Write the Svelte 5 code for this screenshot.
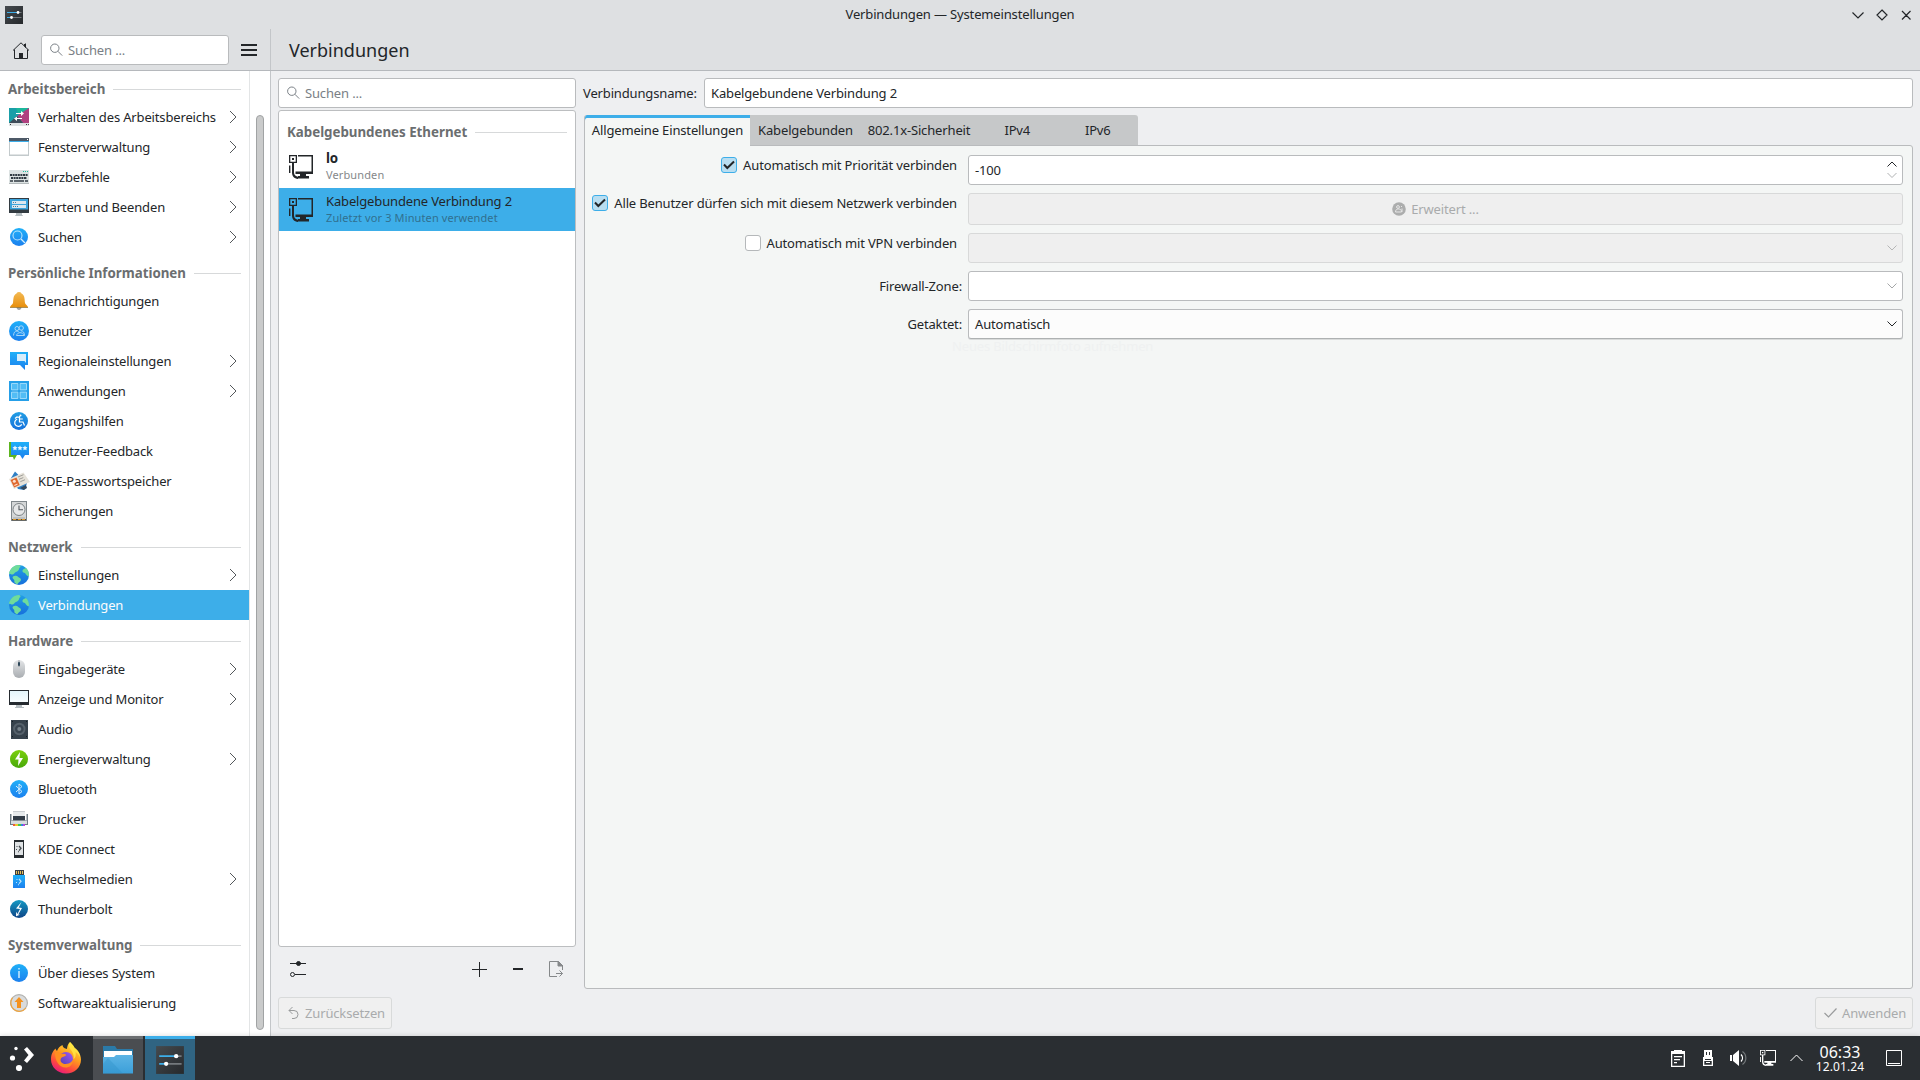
<script lang="ts">
  interface Item {
    icon: string;
    label: string;
    more?: boolean;
  }

  interface Section {
    title: string;
    items: Item[];
  }

  const sections: Section[] = [
    {
      title: 'Arbeitsbereich',
      items: [
        { icon: 'workspace', label: 'Verhalten des Arbeitsbereichs', more: true },
        { icon: 'window', label: 'Fensterverwaltung', more: true },
        { icon: 'keyboard', label: 'Kurzbefehle', more: true },
        { icon: 'startup', label: 'Starten und Beenden', more: true },
        { icon: 'search', label: 'Suchen', more: true },
      ],
    },
    {
      title: 'Persönliche Informationen',
      items: [
        { icon: 'bell', label: 'Benachrichtigungen' },
        { icon: 'users', label: 'Benutzer' },
        { icon: 'region', label: 'Regionaleinstellungen', more: true },
        { icon: 'apps', label: 'Anwendungen', more: true },
        { icon: 'access', label: 'Zugangshilfen' },
        { icon: 'feedback', label: 'Benutzer-Feedback' },
        { icon: 'wallet', label: 'KDE-Passwortspeicher' },
        { icon: 'backup', label: 'Sicherungen' },
      ],
    },
    {
      title: 'Netzwerk',
      items: [
        { icon: 'globe', label: 'Einstellungen', more: true },
        { icon: 'globe', label: 'Verbindungen' },
      ],
    },
    {
      title: 'Hardware',
      items: [
        { icon: 'mouse', label: 'Eingabegeräte', more: true },
        { icon: 'monitor', label: 'Anzeige und Monitor', more: true },
        { icon: 'audio', label: 'Audio' },
        { icon: 'power', label: 'Energieverwaltung', more: true },
        { icon: 'bluetooth', label: 'Bluetooth' },
        { icon: 'printer', label: 'Drucker' },
        { icon: 'phone', label: 'KDE Connect' },
        { icon: 'usb', label: 'Wechselmedien', more: true },
        { icon: 'thunderbolt', label: 'Thunderbolt' },
      ],
    },
    {
      title: 'Systemverwaltung',
      items: [
        { icon: 'info', label: 'Über dieses System' },
        { icon: 'update', label: 'Softwareaktualisierung' },
      ],
    },
  ];

  // 22x22 glyphs, gradients live in the shared defs at the top of the page
  const icons: Record<string, string> = {
    workspace: `<path d="M1 2h20v15H1z" fill="#1a9fa8"/><path d="M8 2h13L11 10z" fill="#1cb79b"/><path d="M21 2v15h-6l-6-7z" fill="#b0417f"/><path d="M1 17l8-7 6 7z" fill="#3f4c59"/><path d="M1 17h20v3H1z" fill="#dfe3e4"/><path d="M2 18h1v1H2zM18 18h1v1h-1zM20 18h.8v1H20z" fill="#333"/><path d="M8 7h5V5l3 2.500L13 10V8H8zM14 13H9v2l-3-2.500L9 10.500V12h5z" fill="#fff"/>`,
    window: `<path d="M1 2h20v18H1z" fill="#c3cacc"/><path d="M1 2h20v3H1z" fill="#4d5967"/><path d="M1 5h20v1H1z" fill="#3daee9"/><path d="M2 6h18v12.500H2z" fill="#fff"/><path d="M19 3h1v1h-1z" fill="#fff"/>`,
    keyboard: `<path d="M1 4h20v14H1z" fill="#dce2e2"/><path d="M1 17h20v1H1z" fill="#b4babb"/><path d="M15 5h1v1h-1zM17 5h1v1h-1zM19 5h1v1h-1z" fill="#1abc9c"/><path d="M2 9h18M3 12h16" stroke="#303a42" stroke-width="2" stroke-dasharray="2 .6"/><path d="M2 15h3M6 15h10M17 15h3" stroke="#303a42" stroke-width="1.700"/>`,
    startup: `<path d="M8 17h6v2.300h1v.7H7v-.7h1z" fill="#b6bec2"/><path d="M1 2h20v15H1z" fill="#333b41"/><path d="M2 3h18v10.500H2z" fill="#3ca4dc"/><path d="M4 5h14v3H4zM4 9h14v3H4z" fill="#dbe7ee"/><path d="M5 6h1v1H5zM7 6h1v1H7zM5 10h1v1H5zM7 10h1v1H7zM9 10h1v1H9z" fill="#4b7d9c"/>`,
    search: `<circle cx="11" cy="11" r="9" fill="url(#gblue)"/><circle cx="9.500" cy="9.500" r="4.500" fill="none" stroke="#b9e3fb" stroke-width="1.100"/><path d="M13 13l4 4" stroke="#d5effd" stroke-width="1.300"/>`,
    bell: `<path d="M8.500 17h5c0 4-5 4-5 0" fill="#9fa3a6"/><path d="M11 2c2 0 2 1 2.500 1.600C17 5 16.500 10 17 13c.4 1.600 2 2 3 4H2c1-2 2.600-2.400 3-4 .5-3 0-8 3.500-9.400C9 3 9 2 11 2z" fill="url(#gbell)"/><path d="M2 17h18v.8H2z" fill="#9a7327"/>`,
    users: `<circle cx="11" cy="11" r="10" fill="url(#gblue)"/><g fill="none" stroke="#a9d7f8" stroke-width="1"><circle cx="9" cy="8.500" r="2"/><circle cx="13.200" cy="8" r="2.200"/><path d="M5.500 15.500c.2-3 1.500-4.500 3.500-4.500 1 0 1.500.5 2 1.200M8.500 15.500c.4-1.800 2-2.800 3.500-2.800s3.600.6 4.500 2.800zM13 10.800c2.200 0 3.300 2 3.500 4"/></g>`,
    region: `<path d="M2 2h18v13h-3v5l-5-5H2z" fill="url(#gblue)"/><path d="M9 4h9v9l-1.500-2H9z" fill="#d7eefb"/>`,
    apps: `<path d="M1 1h20v20H1z" fill="#259fe8"/><g fill="#52bdf5" stroke="#a6defa" stroke-width=".9"><path d="M3.500 3.500h6.400v6.400H3.500zM12.100 3.500h6.400v6.400h-6.400zM3.500 12.100h6.400v6.400H3.500zM12.100 12.100h6.400v6.400h-6.400z"/></g>`,
    access: `<circle cx="11" cy="11" r="9" fill="url(#gblue2)"/><path d="M11.500 6v6h3.500l1.500 3.500M11.500 9h3.300M9.200 9.200a3.700 3.700 0 1 0 4.500 5.200M7 8.500l2-1.500 2.500.5" fill="none" stroke="#fff" stroke-width="1.200"/><circle cx="12.500" cy="5.500" r="1" fill="#fff"/>`,
    feedback: `<path d="M1 2h4v13h4l-3 5-1-3H1z" fill="#5db51f"/><path d="M3 2h18v13h-4l-2.500 4L12 15H3z" fill="url(#gblue)"/><path d="M7 5.500l.8 1.600 1.700.2-1.200 1.200.3 1.800L7 9.400l-1.600.9.3-1.800-1.200-1.200 1.700-.2zM12 5.500l.8 1.600 1.700.2-1.200 1.200.3 1.800-1.600-.9-1.600.9.3-1.800-1.200-1.200 1.700-.2zM17 5.500l.8 1.600 1.700.2-1.200 1.200.3 1.800-1.600-.9-1.600.9.3-1.800-1.200-1.200 1.700-.2z" fill="#e8f6fe"/>`,
    wallet: `<path d="M7 1.500l12 12-3 6.500-6-1L3 8z" fill="#2f7fc4"/><path d="M12 18l6-3 1 3-3 2z" fill="#34495e"/><path d="M1 9L15.500 2.500 22 12 6 19z" fill="#e6e2d9"/><path d="M2.500 10l6-2.600 3.200 7.600-5.500 2.500z" fill="#e0672c"/><circle cx="6.300" cy="11.300" r="1.500" fill="#fbe2d2"/><path d="M6.300 15.500l3.200-1.500" stroke="#fbe2d2" stroke-width="1.200"/><path d="M10 7l5.500-2.300M11 9.300l4.300-1.700M12.300 11.700l4.700-2" stroke="#8b8b88" stroke-width=".8"/>`,
    backup: `<path d="M3 1h16v20H3z" fill="#80878b"/><path d="M4 2h14v18H4z" fill="#d4d6d7"/><circle cx="11" cy="9.500" r="6" fill="#e6e7e8" stroke="#7b8184"/><path d="M11 5.500v4.300h4" fill="none" stroke="#555b5f" stroke-width="1.100"/><path d="M5 17h12v2H5z" fill="#bcc0c2"/><path d="M4 19h14v1.500H4z" fill="#4f4a40"/><path d="M5 19h3v1H5zM10 19h3v1h-3zM14 19h3v1h-3z" fill="#e39a2c"/>`,
    globe: `<circle cx="11" cy="11" r="10" fill="url(#gblue2)"/><path d="M11 1.100C8 1 5 2.500 3 5c-1.500 2-2 3.500-2 5 1.500-1 2 .5 3.300.5C6 10.500 6.500 8.500 8 8c1.500-.6 2.800-1.500 3-3 .2-1.300 1.500-1.500 1.500-2.400S12 1.600 11 1.100zM5 12.500c1.500-1.300 4-.8 5 .2s3 1.300 3 3c0 2-2.500 2.200-3.500 4.300-.8.2-2.500-.6-3-1.500-.4-1 .3-1.800-.5-2.800S3.800 13.700 5 12.500zM18 4c-1.300.6-3 1-3.500 2.500-.3 1.200.5 2 1.700 2.200 1.200.2 1.500 1.500 2.500 2.600.8.8 1.300 1.200 2.200 1C21.500 8.500 20 6 18 4z" fill="#6fdc9b"/>`,
    mouse: `<rect x="5" y="2" width="12" height="18" rx="6" fill="url(#ggrey)"/><path d="M10.500 2.200h1V9h-1z" fill="#8d959b"/><rect x="10" y="4" width="2" height="4" rx="1" fill="#2d4658"/>`,
    monitor: `<path d="M8 17h6v2h2v1H7v-1h1z" fill="#b6bec2"/><path d="M1 2h20v15H1z" fill="#262b30"/><path d="M2 3h18v11H2z" fill="url(#gscreen)"/>`,
    audio: `<path d="M3 2h17v19H3z" fill="#36414b"/><circle cx="11.300" cy="11" r="6.200" fill="#56616b"/><circle cx="11.300" cy="11" r="4.300" fill="#3a4550"/><circle cx="11.300" cy="11" r="2" fill="#78838c"/><path d="M4 3h1v1H4zM18 3h1v1h-1zM4 18h1v1H4zM18 18h1v1h-1z" fill="#161b20"/>`,
    power: `<circle cx="11" cy="11" r="9" fill="url(#ggreen)"/><path d="M12 4l-5 7.500h3.500L10 18l5-8h-3.500z" fill="#fff"/>`,
    bluetooth: `<circle cx="11" cy="11" r="9" fill="url(#gblue)"/><path d="M8 8l6 5.500-3 2.500V6l3 2.500L8 14" fill="none" stroke="#d8effd" stroke-width="1"/>`,
    printer: `<path d="M5 3h12v6H5z" fill="#e7eaec"/><path d="M5 3h12v1H5z" fill="#c8ccd0"/><path d="M2 6h1.500v6h15V6H20v11H2z" fill="#717d86"/><path d="M5 8h12v5H5z" fill="#323c47"/><path d="M3 12.500h16V16H3z" fill="#d8dcdf"/><path d="M5 16h2v2H5z" fill="#ed5a3d"/><path d="M7 16h3v2H7z" fill="#efc52e"/><path d="M10 16h3v2h-3z" fill="#3fc94d"/><path d="M13 16h2v2h-2z" fill="#3586e0"/><path d="M15 16h2v2h-2z" fill="#b749d8"/>`,
    phone: `<path d="M6 2h10v18H6z" fill="#272c30"/><path d="M7 4h8v13H7z" fill="#dfe2e4"/><path d="M11 8l2 2.300-2 2.300" fill="none" stroke="#444b50" stroke-width="1.300"/><path d="M8.500 8h1v1h-1zM8 11h1v1H8zM10 13.300h1v1h-1z" fill="#444b50"/>`,
    usb: `<path d="M7 2h9v5H7z" fill="#3a3f43"/><path d="M8 3h1v3H8zM10 3h1v3h-1zM12 3h1v3h-1zM14 3h1v3h-1z" fill="#e8c15b"/><path d="M5 7h12v13H5z" fill="url(#gblue)"/><path d="M11 11l2 2.300-2 2.300" fill="none" stroke="#bfe4fb" stroke-width="1.200"/><path d="M8.500 11h1v1h-1zM8 14h1v1H8zM10 16.300h1v1h-1z" fill="#bfe4fb"/>`,
    thunderbolt: `<circle cx="11" cy="11" r="9" fill="url(#gnavy)"/><path d="M13.500 4L8 10.500l4 .5-2.500 5-1.300-2.200-.2 4.500 4-1.600-1.800-.3L14 10l-3.300-.6z" fill="#fff"/>`,
    info: `<circle cx="11" cy="11" r="9" fill="url(#gblue)"/><path d="M10.300 9h1.400v7h-1.400zM10.300 6h1.400v1.500h-1.400z" fill="#d8f0fe"/>`,
    update: `<circle cx="11" cy="11" r="8.400" fill="#d9dbdc" stroke="#b2b2b0" stroke-width="1.200"/><path d="M4.500 5.600A8.400 8.400 0 1 0 18 16" fill="none" stroke="#f2a53c" stroke-width="1.200"/><path d="M11 5l4.500 5H13v6H9v-6H6.500z" fill="#f5921f"/>`,
    settings: `<path d="M2 2h18v18H2z" fill="url(#gdark)"/><path d="M4 8.500h12M4 13.500h5" stroke="#3daee9" stroke-width="1"/><path d="M16 8.500h2.500M9 13.500h9.500" stroke="#74797d" stroke-width="1"/><circle cx="15" cy="8.500" r="1.400" fill="#fff"/><circle cx="8.500" cy="13.500" r="1.400" fill="#fff"/>`,
  };

  const connections = [
    { name: 'lo', state: 'Verbunden', active: true },
    { name: 'Kabelgebundene Verbindung 2', state: 'Zuletzt vor 3 Minuten verwendet', active: false },
  ];

  const tabs = [
    { label: 'Allgemeine Einstellungen', cls: 'general' },
    { label: 'Kabelgebunden', cls: 'wired' },
    { label: '802.1x-Sicherheit', cls: 'security' },
    { label: 'IPv4', cls: 'ip' },
    { label: 'IPv6', cls: 'ip' },
  ];

  let page = $state('Verbindungen');
  let connection = $state('Kabelgebundene Verbindung 2');
  let tab = $state('Allgemeine Einstellungen');
  let autoConnect = $state(true);
  let allUsers = $state(true);
  let autoVpn = $state(false);
</script>

{#snippet glyph(name: string, size: number)}
  <svg class="glyph" width={size} height={size} viewBox="0 0 22 22">{@html icons[name]}</svg>
{/snippet}

{#snippet magnifier()}
  <svg width="14" height="14" viewBox="0 0 14 14" fill="none" stroke="#7a8086">
    <circle cx="4.800" cy="5.200" r="4.200" /><path d="M7.800 8.200l4.400 4.400" />
  </svg>
{/snippet}

{#snippet down(color: string)}
  <svg class="down" width="12" height="8" viewBox="0 0 12 8" fill="none" stroke={color}>
    <path d="M1.500 1.500L6 6l4.500-4.500" />
  </svg>
{/snippet}

{#snippet wired(color: string, size: number)}
  <svg width={size} height={size} viewBox="0 0 24 24" fill={color}>
    <path d="M0 0h8v8H5v9.500C5 20 7 21.500 9 21.700V24C5 23.500 3 21 3 17.500V8H0zM1.300 1.300v5.400h5.400V1.300zM3 3h2v2H3zM0 10.500h1.400V18H0z" fill-rule="evenodd" />
    <path d="M9 0h15v19h-7v2h3v2.500H9V21h2v-2H6.500v-2.500h16V1.400H9z" />
  </svg>
{/snippet}

{#snippet check(label: string, on: boolean, toggle: () => void)}
  <button class="check" role="checkbox" aria-checked={on} onclick={toggle}>
    <span class="box" class:on>
      {#if on}
        <svg width="12" height="10" viewBox="0 0 12 10" fill="none" stroke="#232629" stroke-width="2">
          <path d="M1 4.500L4.300 8 11 1.500" />
        </svg>
      {/if}
    </span>
    <span>{label}</span>
  </button>
{/snippet}

<svg class="defs" width="0" height="0">
  <defs>
    <linearGradient id="gblue" x1="0" y1="0" x2="0" y2="1"><stop offset="0" stop-color="#1fb0f8" /><stop offset="1" stop-color="#1c80ee" /></linearGradient>
    <linearGradient id="gblue2" x1="0" y1="0" x2="0" y2="1"><stop offset="0" stop-color="#229fe4" /><stop offset="1" stop-color="#1670dc" /></linearGradient>
    <linearGradient id="gnavy" x1="0" y1="0" x2="0" y2="1"><stop offset="0" stop-color="#149ac4" /><stop offset="1" stop-color="#0f4587" /></linearGradient>
    <linearGradient id="ggreen" x1="0" y1="0" x2="0" y2="1"><stop offset="0" stop-color="#7bd00c" /><stop offset="1" stop-color="#48a80a" /></linearGradient>
    <linearGradient id="gbell" x1="0" y1="0" x2="0" y2="1"><stop offset="0" stop-color="#f3ba55" /><stop offset="1" stop-color="#e88f0c" /></linearGradient>
    <linearGradient id="ggrey" x1="0" y1="0" x2="0" y2="1"><stop offset="0" stop-color="#e3e5e7" /><stop offset="1" stop-color="#a9adb1" /></linearGradient>
    <linearGradient id="gscreen" x1="0" y1="0" x2="0" y2="1"><stop offset="0" stop-color="#e4f5fb" /><stop offset="1" stop-color="#f8fdff" /></linearGradient>
    <linearGradient id="gdark" x1="0" y1="0" x2="1" y2="1"><stop offset="0" stop-color="#454a4e" /><stop offset="1" stop-color="#26292c" /></linearGradient>
    <linearGradient id="gfolder" x1="0" y1="0" x2="0" y2="1"><stop offset="0" stop-color="#5cb4e4" /><stop offset="1" stop-color="#3c9fd9" /></linearGradient>
    <linearGradient id="gfox" x1=".8" y1="0" x2=".3" y2="1"><stop offset="0" stop-color="#ffe93a" /><stop offset=".45" stop-color="#ff9a1f" /><stop offset=".75" stop-color="#ff4a3d" /><stop offset="1" stop-color="#e8197e" /></linearGradient>
    <linearGradient id="gfoxcore" x1="1" y1="0" x2="0" y2="1"><stop offset="0" stop-color="#a558f5" /><stop offset="1" stop-color="#4a3fae" /></linearGradient>
  </defs>
</svg>

<div class="desktop">
  <div class="titlebar">
    <span class="appicon">{@render glyph('settings', 22)}</span>
    <span class="wintitle">Verbindungen — Systemeinstellungen</span>
    <svg class="winbuttons" width="62" height="14" viewBox="0 0 62 14" fill="none" stroke="#232629" stroke-width="1.200">
      <path d="M1.500 4.500L7 10l5.500-5.500M31 2l5 5-5 5-5-5zM51 3l8.500 8.500M59.500 3L51 11.500" />
    </svg>
  </div>

  <header>
    <div class="tools">
      <svg width="16" height="17" viewBox="0 0 16 17">
        <path d="M0 8.500L8 .8l8 7.700M1.500 7.500v9h13v-9M12.500 1.500v4" fill="none" stroke="#232629" />
        <path d="M6 11h4v6H6zM11 2h2v4l-2-2z" fill="#232629" />
      </svg>
      <div class="field search">{@render magnifier()}<span>Suchen ...</span></div>
      <svg width="16" height="12" viewBox="0 0 16 12" fill="#232629"><path d="M0 0h16v2H0zM0 5h16v2H0zM0 10h16v2H0z" /></svg>
    </div>
    <h1>Verbindungen</h1>
  </header>

  <div class="body">
    <aside>
      <nav>
        {#each sections as section}
          <div class="heading"><span>{section.title}</span><i></i></div>
          {#each section.items as item}
            <button class="row" class:selected={page === item.label} onclick={() => (page = item.label)}>
              {@render glyph(item.icon, 22)}
              <span>{item.label}</span>
              {#if item.more}
                <svg class="more" width="8" height="14" viewBox="0 0 8 14" fill="none" stroke="#54585b"><path d="M1 1l6 6-6 6" /></svg>
              {/if}
            </button>
          {/each}
        {/each}
      </nav>
      <div class="scroll"><div class="thumb"></div></div>
    </aside>

    <main>
      <div class="columns">
        <section class="left">
          <div class="field search">{@render magnifier()}<span>Suchen ...</span></div>
          <div class="list">
            <div class="heading"><span>Kabelgebundenes Ethernet</span><i></i></div>
            {#each connections as c}
              <button class="conn" class:active={c.active} class:current={connection === c.name} onclick={() => (connection = c.name)}>
                {@render wired('#232629', 24)}
                <span class="text"><span class="name">{c.name}</span><small>{c.state}</small></span>
              </button>
            {/each}
          </div>
          <div class="actions">
            <svg width="16" height="16" viewBox="0 0 16 16" fill="none" stroke="#232629">
              <path d="M0 2.500h16M5 13.500h11" /><circle cx="8.500" cy="2.500" r="2" fill="#232629" /><circle cx="2.500" cy="13.500" r="2" />
            </svg>
            <svg class="add" width="15" height="15" viewBox="0 0 15 15" stroke="#232629"><path d="M0 7.500h15M7.500 0v15" /></svg>
            <svg class="remove" width="10" height="2" viewBox="0 0 10 2" fill="#232629"><path d="M0 0h10v2H0z" /></svg>
            <svg class="export" width="15" height="16" viewBox="0 0 15 16" fill="none" stroke="#85888a">
              <path d="M8 15.500H.5V.5h9l4 4V9M7 12.500h6.500M10.500 9.500l3 3-3 3" /><path d="M9 .5v4.500h5z" fill="#85888a" />
            </svg>
          </div>
        </section>

        <section class="right">
          <div class="namerow">
            <span>Verbindungsname:</span>
            <div class="field">Kabelgebundene Verbindung 2</div>
          </div>
          <div class="tabs">
            {#each tabs as t}
              <button class="tab {t.cls}" class:open={tab === t.label} onclick={() => (tab = t.label)}>{t.label}</button>
            {/each}
          </div>
          <div class="panel">
            <div class="line">
              <div class="label">{@render check('Automatisch mit Priorität verbinden', autoConnect, () => (autoConnect = !autoConnect))}</div>
              <div class="field">
                <span>-100</span>
                <svg class="spin" width="12" height="20" viewBox="0 0 12 20" fill="none">
                  <path d="M1.500 6.500L6 2l4.500 4.500" stroke="#232629" /><path d="M1.500 13L6 17.500l4.500-4.500" stroke="#b0b2b3" />
                </svg>
              </div>
            </div>
            <div class="line">
              <div class="label">{@render check('Alle Benutzer dürfen sich mit diesem Netzwerk verbinden', allUsers, () => (allUsers = !allUsers))}</div>
              <div class="field off tall">
                <svg width="14" height="14" viewBox="0 0 14 14">
                  <circle cx="7" cy="7" r="6.800" fill="#acadad" /><path d="M3.500 10c0-2 1-3 3-3s3 1 3 3z" fill="none" stroke="#e6e6e6" />
                  <circle cx="6" cy="5" r="1.400" fill="none" stroke="#e6e6e6" /><path d="M9 4h1v1H9zM9.500 6.500h1V10h-1z" fill="#e6e6e6" />
                </svg>
                <span>Erweitert ...</span>
              </div>
            </div>
            <div class="line">
              <div class="label">{@render check('Automatisch mit VPN verbinden', autoVpn, () => (autoVpn = !autoVpn))}</div>
              <div class="field off">{@render down('#b5b6b6')}</div>
            </div>
            <div class="line">
              <div class="label plain">Firewall-Zone:</div>
              <div class="field">{@render down('#a5a7a8')}</div>
            </div>
            <div class="line">
              <div class="label plain">Getaktet:</div>
              <div class="field combo"><span>Automatisch</span>{@render down('#232629')}</div>
            </div>
            <div class="fading">Neues Bildschirmfoto aufnehmen</div>
          </div>
        </section>
      </div>

      <footer>
        <button class="push reset" disabled>
          <svg width="12" height="14" viewBox="0 0 12 14" fill="none" stroke="#999b9c"><path d="M4.500 1L1 4.500 4.500 8M1 4.500h5a4 4 0 0 1 0 8H4" /></svg>
          <span>Zurücksetzen</span>
        </button>
        <button class="push apply" disabled>
          <svg width="13" height="10" viewBox="0 0 13 10" fill="none" stroke="#999b9c" stroke-width="1.200"><path d="M.5 5l4 4 8-8.500" /></svg>
          <span>Anwenden</span>
        </button>
      </footer>
    </main>
  </div>

  <div class="taskbar">
    <svg class="start" width="26" height="26" viewBox="0 0 26 26" fill="#fff">
      <circle cx="8" cy="3.500" r="1.700" /><circle cx="4.500" cy="13" r="2.600" /><circle cx="11" cy="23" r="3.100" />
      <path d="M16 4.500l3-2.500 7 8-7 8-3-2.500 4.500-5.500z" />
    </svg>
    <svg class="fox" width="32" height="32" viewBox="0 0 32 32">
      <path d="M20 0c2 2 3.500 3.700 4.500 6 2.500 1.500 6.500 6 6.500 11.500C31 25.500 24.500 31.500 16 31.500S1 25 1 17.500C1 12 3 9 5.500 6.500 6 8 6.500 8.500 7 9c1-3 3-5 5.500-6 0 2.500 2.500 3.500 4.500 4C17 4.500 18 2 20 0z" fill="url(#gfox)" />
      <circle cx="16" cy="17" r="7" fill="url(#gfoxcore)" />
      <path d="M5 11c3-1.500 5-.5 6.500 1 1.500-.5 3.500-.5 5 1-1.500 1.800-4.500 1.600-5.500 3.200-1.500 3 1 5.800 4.500 5.800 5 0 6.500-3 8-5-.5 6-4 8.500-8 8.500C9 25.500 5 18.500 5 11z" fill="#ff8f20" />
      <path d="M20 0c-2.500 5 .5 7 2 9.500s2 5 1.500 7.500c2.500-1 2.500-4.500 2-7 2.500 1.500 4 4 4.500 5.500C30 9 26 7 24.500 5.500 23.500 3.500 22 2 20 0z" fill="#fff04a" opacity=".7" />
    </svg>
    <div class="task">
      <svg width="30" height="28" viewBox="0 0 30 28">
        <path d="M0 0h12l2 3h16v8H0z" fill="#2b7aa8" /><path d="M1 5h28v6H1z" fill="#fff" /><path d="M0 11h11l2-2h17v18.500H0z" fill="url(#gfolder)" /><path d="M5 12l15 15.500H0V18z" fill="#2f8fc6" opacity=".35" />
      </svg>
    </div>
    <div class="task focus">{@render glyph('settings', 34)}</div>
    <div class="tray">
      <div class="cell">
        <svg width="14" height="17" viewBox="0 0 14 17" fill="#fff">
          <path d="M3 0h8v1h3v16H0V1h3zM1.300 4v11.700h11.400V4zM3 6h8v1.300H3zM3 9h6v1.300H3zM3 12h3v1.300H3z" fill-rule="evenodd" />
        </svg>
      </div>
      <div class="cell">
        <svg width="10" height="16" viewBox="0 0 10 16" fill="#fff">
          <path d="M1 0h8v7h1v9H0V7h1zM3 2v3h1V2zM6 2v3h1V2zM2 9v1h6V9zM1.300 11v3.700h7.400V11zM3 12h4v1H3z" fill-rule="evenodd" />
        </svg>
      </div>
      <div class="cell">
        <svg width="17" height="16" viewBox="0 0 17 16" fill="#fff">
          <path d="M0 5h2v6H0zM3 5l6-5v16l-6-5z" /><path d="M11 4.500a5 5 0 0 1 0 7" fill="none" stroke="#fff" stroke-width="1.300" /><path d="M12.500 1.500a8 8 0 0 1 0 13" fill="none" stroke="#73777a" stroke-width="1.200" />
        </svg>
      </div>
      <div class="cell">{@render wired('#fff', 16)}</div>
      <div class="cell expand">
        <svg width="13" height="8" viewBox="0 0 13 8" fill="none" stroke="#fff"><path d="M.5 7l6-6 6 6" /></svg>
      </div>
    </div>
    <div class="clock"><b>06:33</b><span>12.01.24</span></div>
    <svg class="show" width="16" height="16" viewBox="0 0 16 16" fill="none" stroke="#fff"><path d="M.5.5h15v15H.5zM2 13.500h12" /></svg>
  </div>
</div>

<style>
  :global(body) {
    margin: 0;
    background: #eeeff1;
  }
  .desktop {
    width: 1920px;
    height: 1080px;
    display: flex;
    flex-direction: column;
    overflow: hidden;
    background: #eeeff1;
    color: #232629;
    font: 13px/18px "Noto Sans", sans-serif;
    letter-spacing: -0.15px;
  }
  .defs { position: absolute; }
  svg { display: block; flex: none; }
  button {
    border: 0;
    margin: 0;
    padding: 0;
    background: none;
    color: inherit;
    font: inherit;
    letter-spacing: inherit;
    text-align: left;
    white-space: nowrap;
  }

  .titlebar {
    height: 29px;
    flex: none;
    display: grid;
    grid-template-columns: 1fr auto 1fr;
    align-items: center;
    background: #dee0e2;
  }
  .appicon { padding-left: 3px; }
  .wintitle { padding-bottom: 2px; }
  .winbuttons { justify-self: end; margin-right: 7px; }

  header {
    height: 41px;
    flex: none;
    display: flex;
    background: #dee0e2;
    border-bottom: 1px solid #b5b8bc;
  }
  .tools {
    width: 270px;
    box-sizing: border-box;
    flex: none;
    display: flex;
    align-items: center;
    padding: 1px 13px 0 13px;
  }
  .tools .search { width: 188px; margin: 0 12px; }
  header h1 {
    margin: 0;
    padding: 0 0 0 18px;
    border-left: 1px solid #c3c6c9;
    font-size: 18px;
    font-weight: 400;
    line-height: 43px;
    letter-spacing: 0;
  }

  .field {
    height: 30px;
    box-sizing: border-box;
    display: flex;
    align-items: center;
    border: 1px solid #b9bbbd;
    border-radius: 3px;
    background: #fff;
    padding: 0 6px;
  }
  .search { gap: 4px; padding: 0 8px; color: #7a8086; }

  .body { flex: 1; min-height: 0; display: flex; }
  aside {
    width: 270px;
    flex: none;
    display: flex;
    overflow: hidden;
    background: #fff;
    border-right: 1px solid #c3c6c9;
  }
  nav { width: 249px; margin-top: -3px; }
  .heading {
    height: 34px;
    box-sizing: border-box;
    padding: 8px 8px 0;
    display: flex;
    align-items: center;
    gap: 8px;
    color: #6b6e70;
    font-weight: 700;
    font-size: 13.333px;
    letter-spacing: -0.02px;
  }
  .heading i { flex: 1; height: 1px; background: #d7d9da; }
  .row {
    width: 100%;
    height: 30px;
    display: flex;
    align-items: center;
    gap: 8px;
    padding: 0 12px 0 8px;
  }
  .row span { flex: 1; }
  .row.selected { background: #3daee9; color: #fcfcfc; }
  .scroll {
    width: 20px;
    border-left: 1px solid #e3e5e6;
    padding: 44px 0 6px;
    box-sizing: border-box;
    display: flex;
    justify-content: center;
  }
  .thumb {
    width: 8px;
    box-sizing: border-box;
    border: 1px solid #a1a3a4;
    border-radius: 4px;
    background: #cacbcb;
  }

  main {
    flex: 1;
    min-width: 0;
    display: flex;
    flex-direction: column;
    padding: 7px 7px 7px;
  }
  .columns { flex: 1; display: flex; gap: 8px; min-height: 0; }
  .left { width: 298px; flex: none; display: flex; flex-direction: column; }
  .list {
    height: 837px;
    box-sizing: border-box;
    margin-top: 2px;
    border: 1px solid #bcbec0;
    border-radius: 3px;
    background: #fff;
  }
  .conn {
    width: 100%;
    height: 43px;
    display: flex;
    align-items: center;
    gap: 13px;
    padding-left: 10px;
  }
  .conn .text { display: flex; flex-direction: column; padding-bottom: 2px; }
  .conn small { font-size: 11px; line-height: 16px; letter-spacing: 0.12px; color: #85888a; }
  .conn.active .name { font-weight: 700; font-size: 13.333px; }
  .conn.current { background: #3daee9; }
  .conn.current small { color: #31708f; }
  .actions { height: 44px; display: flex; align-items: center; padding: 0 12px; }
  .add { margin-left: 166px; }
  .remove { margin-left: 26px; }
  .export { margin-left: 26px; }

  .right { flex: 1; min-width: 0; display: flex; flex-direction: column; }
  .namerow { display: flex; align-items: center; margin-left: -1px; }
  .namerow span { width: 121px; }
  .namerow .field { flex: 1; }
  .tabs { display: flex; height: 31px; margin: 7px 0 -1px; position: relative; }
  .tab {
    height: 31px;
    box-sizing: border-box;
    text-align: center;
    background: #c6c8c9;
    border-bottom: 1px solid #b9bbbd;
  }
  .tab.general { width: 166px; border-top-left-radius: 3px; }
  .tab.wired { width: 111px; }
  .tab.security { width: 116px; }
  .tab.ip { width: 80.500px; }
  .tab:last-child { border-top-right-radius: 3px; }
  .tab.open {
    background: #f4f6f5;
    border: solid #b9bbbd;
    border-width: 0 0 0 1px;
    padding-bottom: 1px;
    box-shadow: inset 0 3px #3daee9;
  }
  .panel {
    height: 844px;
    box-sizing: border-box;
    border: 1px solid #b9bbbd;
    border-radius: 0 3px 3px 3px;
    background: #f4f6f5;
    padding: 9px 9px 0 0;
    display: flex;
    flex-direction: column;
    gap: 8px;
  }
  .line { display: flex; }
  .label { width: 383px; flex: none; display: flex; justify-content: flex-end; align-items: flex-start; }
  .label.plain { box-sizing: border-box; padding-right: 6px; align-items: center; }
  .line .field { flex: 1; }
  .check { display: flex; gap: 6px; align-items: center; padding: 1px 11px 0 0; }
  .box {
    width: 16px;
    height: 16px;
    box-sizing: border-box;
    display: grid;
    place-items: center;
    border: 1px solid #b5b8ba;
    border-radius: 3px;
    background: #fff;
  }
  .box.on { border-color: #3daee9; background: #b9def1; }
  .field.off { background: #efefef; border-color: #d8d9d9; color: #a9abac; }
  .field.tall { height: 32px; justify-content: center; gap: 5px; }
  .field.combo { background: #fcfcfc; border-bottom-color: #aeb1b2; box-shadow: 0 1px #d9dbdb; }
  .down, .spin { margin-left: auto; margin-right: -2px; }
  .fading { margin: -10px 0 0 367px; color: #eff1f1; }

  footer { height: 32px; flex: none; display: flex; justify-content: space-between; }
  .push {
    height: 32px;
    box-sizing: border-box;
    display: flex;
    align-items: center;
    gap: 5px;
    border: 1px solid #d8dada;
    border-radius: 3px;
    background: #f0f0f0;
    color: #a9abac;
  }
  .reset { width: 114px; padding-left: 9px; }
  .apply { width: 98px; padding-left: 8px; }

  .taskbar {
    height: 44px;
    flex: none;
    display: flex;
    align-items: center;
    background: #2a2e32;
    color: #fcfcfc;
    box-shadow: 0 0 5px rgba(0, 0, 0, 0.16);
    z-index: 1;
  }
  .start { margin-left: 8px; }
  .fox { margin-left: 16px; margin-right: 11px; }
  .task {
    width: 50px;
    height: 44px;
    box-sizing: border-box;
    border-top: 3px solid #6b6e71;
    background: #4a4d51;
    display: grid;
    place-items: center;
    margin-right: 2px;
  }
  .task.focus { border-color: #3daee9; background: #306482; }
  .tray { margin-left: auto; display: flex; align-items: center; }
  .cell { width: 30px; display: grid; place-items: center; }
  .cell.expand { width: 26px; }
  .clock {
    width: 62px;
    display: flex;
    flex-direction: column;
    align-items: center;
    font-size: 12px;
    line-height: 13px;
    letter-spacing: 0.1px;
    padding-top: 1px;
  }
  .clock b { font-size: 16px; font-weight: 400; line-height: 16px; letter-spacing: 0; }
  .show { margin: 0 18px 0 15px; }
</style>
